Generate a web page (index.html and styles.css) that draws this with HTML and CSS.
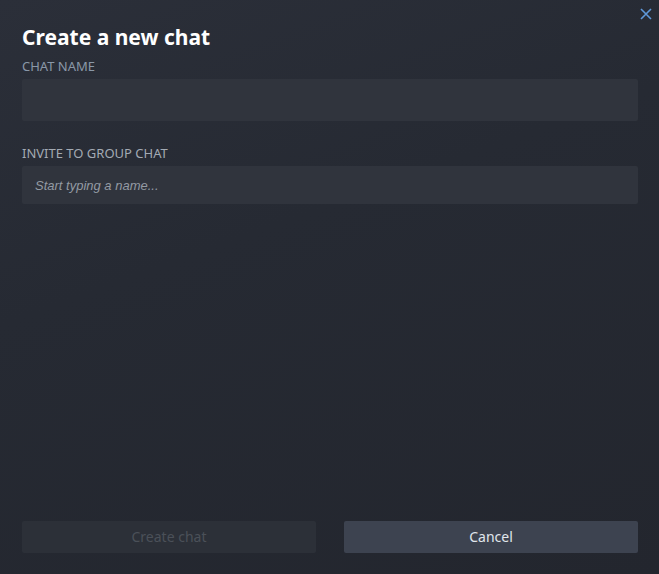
FILE: index.html
```html
<!DOCTYPE html>
<html lang="en">
  <head>
    <meta charset="UTF-8" />
    <title>Create a new chat</title>
    <link rel="stylesheet" href="styles.css">
  </head>
  <body>
    <div class="dialog">
      <button class="close" type="button">
        <svg width="12" height="12" viewBox="0 0 12 12">
          <path d="M1 1L11 11M11 1L1 11" stroke="#5e98d9" stroke-width="1.6" fill="none" />
        </svg>
      </button>

      <h1 class="title">Create a new chat</h1>

      <div class="field">
        <label class="label">CHAT NAME</label>
        <input class="input name" type="text" />
      </div>

      <div class="field invite">
        <label class="label">INVITE TO GROUP CHAT</label>
        <input class="input search" type="text" placeholder="Start typing a name..." />
      </div>

      <div class="btns">
        <button class="btn create" type="button" disabled>Create chat</button>
        <button class="btn cancel" type="button">Cancel</button>
      </div>
    </div>
  </body>
</html>
```

FILE: styles.css
```css
html, body {
  margin: 0;
  height: 100%;
}
body {
  background: linear-gradient(160deg, #2b2f39 0%, #262a33 40%, #23262e 100%);
  font-family: "Noto Sans", "Open Sans", sans-serif;
  color: #dfe3e6;
}
.dialog {
  position: relative;
  box-sizing: border-box;
  height: 100%;
  padding: 23px 21px 21px 22px;
  display: flex;
  flex-direction: column;
}
.close {
  position: absolute;
  top: 8px;
  right: 7px;
  width: 12px;
  height: 12px;
  padding: 0;
  border: none;
  background: none;
}
.close svg {
  display: block;
}
.title {
  margin: 0;
  font-size: 21px;
  line-height: 28px;
  font-weight: 700;
  color: #ffffff;
}
.field {
  display: flex;
  flex-direction: column;
}
.label {
  margin-top: 5px;
  font-size: 13px;
  line-height: 20px;
  color: #8a98a8;
  margin-bottom: 3px;
}
.invite {
  margin-top: 17px;
}
.invite .label {
  color: #a3aab3;
}
.input {
  box-sizing: border-box;
  width: 100%;
  border: none;
  border-radius: 2px;
  background: #30343d;
  outline: none;
  color: #dfe3e6;
}
.name {
  height: 42px;
}
.search {
  height: 38px;
  padding: 0 13px;
  font-family: "Liberation Sans", Arial, sans-serif;
  font-style: italic;
  font-size: 13px;
}
.search::placeholder {
  color: #939aa3;
}
.btns {
  margin-top: auto;
  display: flex;
  gap: 28px;
}
.btn {
  flex: 1;
  height: 32px;
  padding-bottom: 2px;
  border: none;
  border-radius: 2px;
  font-family: "Noto Sans", "Open Sans", sans-serif;
  font-size: 14px;
}
.create {
  background: #2c3038;
  color: #4b5059;
}
.cancel {
  background: #3d4350;
  color: #e0e6ec;
}
```
